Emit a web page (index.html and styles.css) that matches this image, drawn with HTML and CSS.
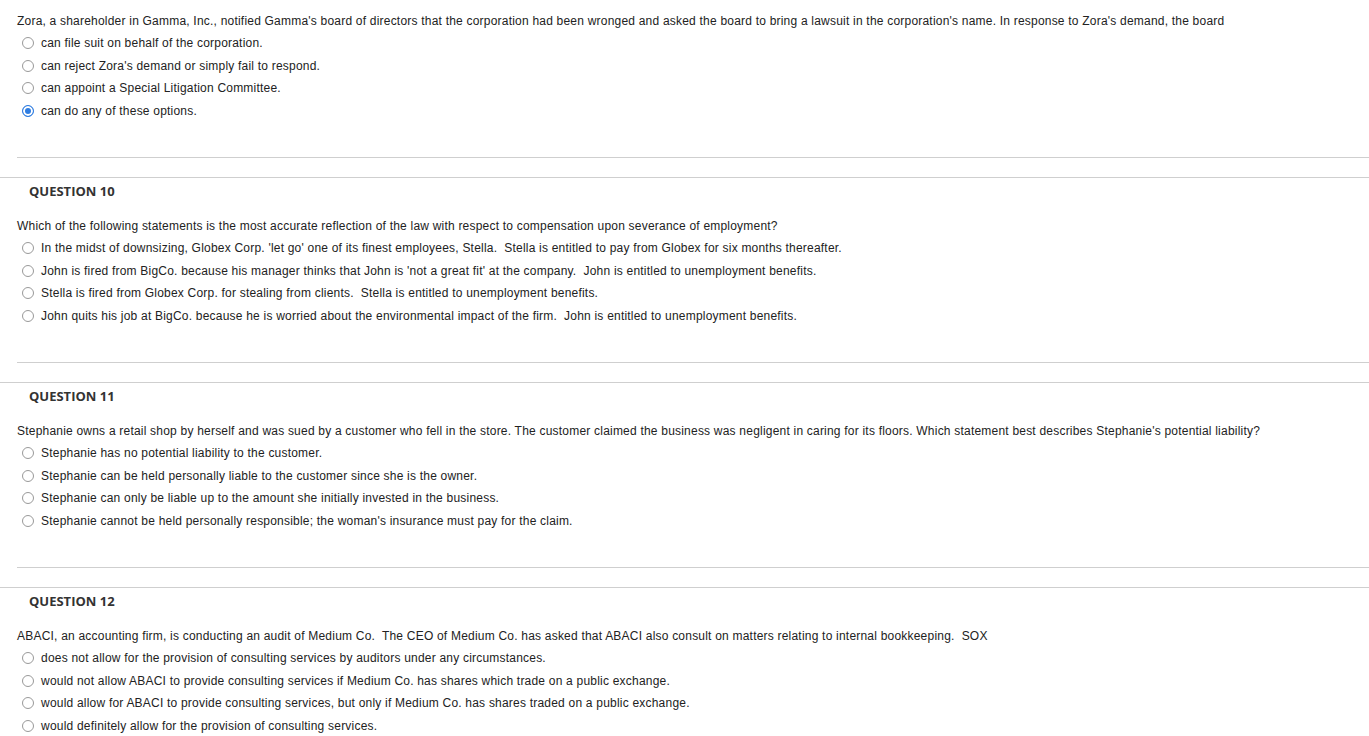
FILE: index.html
```html
<!DOCTYPE html>
<html>
<head>
<meta charset="utf-8">
<link rel="stylesheet" href="styles.css">
</head>
<body>
<div class="page">
  <div class="block first">
    <div class="qtext">Zora, a shareholder in Gamma, Inc., notified Gamma's board of directors that the corporation had been wronged and asked the board to bring a lawsuit in the corporation's name. In response to Zora's demand, the board</div>
    <div class="opt"><span class="radio"></span>can file suit on behalf of the corporation.</div>
    <div class="opt"><span class="radio"></span>can reject Zora's demand or simply fail to respond.</div>
    <div class="opt"><span class="radio"></span>can appoint a Special Litigation Committee.</div>
    <div class="opt"><span class="radio checked"></span>can do any of these options.</div>
    <div class="inner-line"></div>
  </div>

  <div class="block section">
    <div class="heading">QUESTION 10</div>
    <div class="qtext">Which of the following statements is the most accurate reflection of the law with respect to compensation upon severance of employment?</div>
    <div class="opt"><span class="radio"></span>In the midst of downsizing, Globex Corp. 'let go' one of its finest employees, Stella.&nbsp; Stella is entitled to pay from Globex for six months thereafter.</div>
    <div class="opt"><span class="radio"></span>John is fired from BigCo. because his manager thinks that John is 'not a great fit' at the company.&nbsp; John is entitled to unemployment benefits.</div>
    <div class="opt"><span class="radio"></span>Stella is fired from Globex Corp. for stealing from clients.&nbsp; Stella is entitled to unemployment benefits.</div>
    <div class="opt"><span class="radio"></span>John quits his job at BigCo. because he is worried about the environmental impact of the firm.&nbsp; John is entitled to unemployment benefits.</div>
    <div class="inner-line"></div>
  </div>

  <div class="block section">
    <div class="heading">QUESTION 11</div>
    <div class="qtext">Stephanie owns a retail shop by herself and was sued by a customer who fell in the store. The customer claimed the business was negligent in caring for its floors. Which statement best describes Stephanie's potential liability?</div>
    <div class="opt"><span class="radio"></span>Stephanie has no potential liability to the customer.</div>
    <div class="opt"><span class="radio"></span>Stephanie can be held personally liable to the customer since she is the owner.</div>
    <div class="opt"><span class="radio"></span>Stephanie can only be liable up to the amount she initially invested in the business.</div>
    <div class="opt"><span class="radio"></span>Stephanie cannot be held personally responsible; the woman's insurance must pay for the claim.</div>
    <div class="inner-line"></div>
  </div>

  <div class="block section">
    <div class="heading">QUESTION 12</div>
    <div class="qtext">ABACI, an accounting firm, is conducting an audit of Medium Co.&nbsp; The CEO of Medium Co. has asked that ABACI also consult on matters relating to internal bookkeeping.&nbsp; SOX</div>
    <div class="opt"><span class="radio"></span>does not allow for the provision of consulting services by auditors under any circumstances.</div>
    <div class="opt"><span class="radio"></span>would not allow ABACI to provide consulting services if Medium Co. has shares which trade on a public exchange.</div>
    <div class="opt"><span class="radio"></span>would allow for ABACI to provide consulting services, but only if Medium Co. has shares traded on a public exchange.</div>
    <div class="opt"><span class="radio"></span>would definitely allow for the provision of consulting services.</div>
    <div class="inner-line"></div>
  </div>
</div>
</body>
</html>
```
FILE: styles.css
```css
html, body {
  margin: 0;
  padding: 0;
  background: #fff;
}
body {
  font-family: "Liberation Sans", Arial, sans-serif;
  font-size: 12px;
  letter-spacing: 0.21px;
  color: #222;
  overflow: hidden;
}
.page {
  display: flex;
  flex-direction: column;
}
.block.first {
  padding-top: 9.5px;
}
.block.section {
  border-top: 1px solid #cfcfcf;
  margin-top: 19px;
}
.heading {
  font-family: "Open Sans", sans-serif;
  font-weight: 700;
  font-size: 13px;
  line-height: 15px;
  color: #333;
  padding: 6px 0 0 29px;
  margin-bottom: 15.5px;
  letter-spacing: 0;
}
.qtext {
  line-height: 22.5px;
  padding-left: 17px;
  white-space: nowrap;
}
.opt {
  display: flex;
  align-items: center;
  height: 22.5px;
  padding-left: 22px;
  white-space: nowrap;
}
.radio {
  box-sizing: border-box;
  width: 12px;
  height: 12px;
  border: 1px solid #999;
  border-radius: 50%;
  background: #fff;
  margin-right: 7px;
  flex: none;
}
.radio.checked {
  border-color: #2f7de1;
  background: #2f7de1;
  box-shadow: inset 0 0 0 2px #fff;
}
.inner-line {
  margin-top: 35px;
  margin-left: 17px;
  height: 0;
  border-top: 1px solid #cfcfcf;
}
```
